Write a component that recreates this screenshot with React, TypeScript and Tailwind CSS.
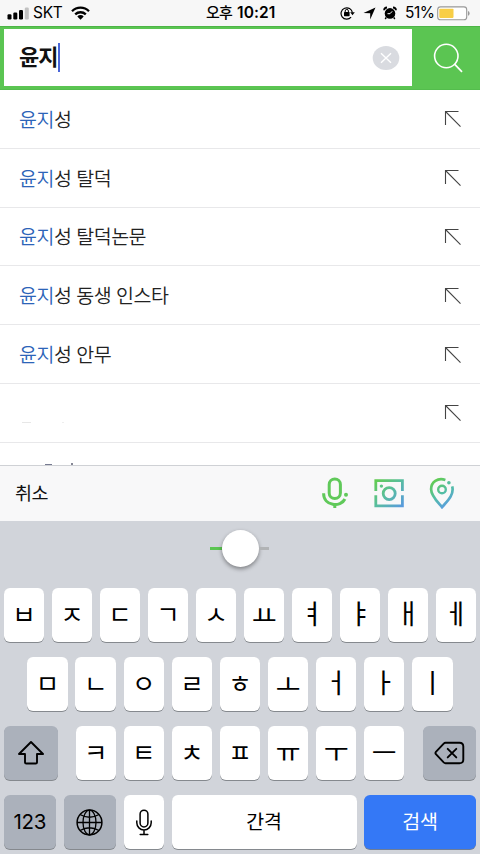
import React from 'react';

const suggestions = ['성', '성 탈덕', '성 탈덕논문', '성 동생 인스타', '성 안무'];
const row1 = ['ㅂ', 'ㅈ', 'ㄷ', 'ㄱ', 'ㅅ', 'ㅛ', 'ㅕ', 'ㅑ', 'ㅐ', 'ㅔ'];
const row2 = ['ㅁ', 'ㄴ', 'ㅇ', 'ㄹ', 'ㅎ', 'ㅗ', 'ㅓ', 'ㅏ', 'ㅣ'];
const row3 = ['ㅋ', 'ㅌ', 'ㅊ', 'ㅍ', 'ㅠ', 'ㅜ', 'ㅡ'];

function StatusBar() {
  return (
    <div className="flex h-[26px] shrink-0 items-center bg-[#f7f7f7] pl-[7px] text-black">
      <svg width="22" height="13" viewBox="0 0 22 13" className="shrink-0">
        <rect x="0.5" y="7.3" width="4" height="5.2" rx="1.2" />
        <rect x="6.3" y="5.6" width="4" height="6.9" rx="1.2" />
        <rect x="12" y="3" width="4" height="9.5" rx="1.2" />
        <rect x="17.8" y="0.5" width="4" height="12" rx="1.2" fill="#c2c2c2" />
      </svg>
      <span className="ml-[4px] w-[33px] font-['Inter'] text-[15.5px] leading-[26px] tracking-[-0.3px]">SKT</span>
      <svg width="19" height="14" viewBox="0 0 19 14" className="ml-[5px] shrink-0">
        <g fill="none" stroke="#000" strokeWidth="2.3">
          <path d="M1 5.2A12.1 12.1 0 0 1 18 5.2" />
          <path d="M4.2 8.4A7.6 7.6 0 0 1 14.8 8.4" />
        </g>
        <path d="M6.3 10.4A4.5 4.5 0 0 1 12.7 10.4L9.5 13.7Z" />
      </svg>
      <div className="ml-[116px] w-[72px] whitespace-nowrap text-[15px] font-medium leading-[26px]">
        <span className="tracking-[-0.8px]">오후</span>
        <span className="ml-[5px] font-['Inter'] text-[15.5px] font-semibold tracking-[0.1px]">10:21</span>
      </div>
      <svg width="15" height="14" viewBox="0 0 15 14" className="ml-[62px] shrink-0">
        <path d="M11.1 11.2A5.7 5.7 0 1 1 12.4 6.7" fill="none" stroke="#000" strokeWidth="1.2" />
        <path d="M10.2 6.3h4.6l-2.3 3z" />
        <rect x="4" y="6" width="5.6" height="4.2" rx="0.6" />
        <path d="M5.2 6V5a1.6 1.6 0 0 1 3.2 0v1" fill="none" stroke="#000" strokeWidth="1" />
      </svg>
      <svg width="13" height="13" viewBox="0 0 13 13" className="ml-[8px] shrink-0">
        <path d="M12.5 0.5L7.2 12.5V6.2L0.5 6.1Z" />
      </svg>
      <svg width="14" height="14" viewBox="0 0 14 14" className="ml-[7px] shrink-0">
        <circle cx="7" cy="7.4" r="5.3" />
        <path d="M1.1 4.3A3 3 0 0 1 4 1.5M13 4.3A3 3 0 0 0 10 1.5" fill="none" stroke="#000" strokeWidth="1.8" />
        <path d="M3.2 11.5L2.2 13M10.8 11.5L11.8 13" stroke="#000" strokeWidth="1.4" />
        <path d="M7 7.7L9.2 5.3M7 7.7H4.5" stroke="#fff" strokeWidth="1" />
      </svg>
      <span className="ml-[8px] w-[29px] font-['Inter'] text-[15.5px] leading-[26px] tracking-[-0.5px]">51%</span>
      <svg width="34" height="15" viewBox="0 0 34 15" className="ml-[3px] shrink-0">
        <rect x="0.7" y="0.9" width="29" height="12.8" rx="2.8" fill="#fff" stroke="#999" strokeWidth="1.1" />
        <rect x="2.3" y="2.7" width="14.2" height="9.2" rx="0.8" fill="#f8ce46" />
        <path d="M31 5v4.8q1.6-.5 1.6-2.4T31 5" fill="#999" />
      </svg>
    </div>
  );
}

function SearchBar() {
  return (
    <div className="flex h-[64px] shrink-0 border-t border-b border-t-[#4db546] border-b-[#54bd4d] bg-[#5bc552] pt-[2px] pb-[3px] pl-[4px]">
      <div className="flex w-[408px] items-center bg-white pr-[12px] pl-[15px]">
        <span className="h-[30px] w-[39px] whitespace-nowrap text-[22px] font-bold leading-[30px] tracking-[-0.9px] text-[#111]">
          윤지
        </span>
        <span className="h-[29px] w-[2px] bg-[#4a66d9]" />
        <svg width="28" height="26" viewBox="0 0 28 26" className="ml-auto">
          <ellipse cx="14" cy="13" rx="13.3" ry="12" fill="#d9dbe0" />
          <path d="M9 8.2L19 17.8M19 8.2L9 17.8" stroke="#fff" strokeWidth="1.4" />
        </svg>
      </div>
      <div className="flex flex-1 items-center justify-center">
        <svg width="32" height="32" viewBox="0 0 32 32" className="ml-[4px]">
          <circle cx="14.3" cy="14" r="11.7" fill="none" stroke="#fff" strokeWidth="1.6" />
          <path d="M22.8 22.3L30 29.8" stroke="#fff" strokeWidth="1.7" />
        </svg>
      </div>
    </div>
  );
}

function Arrow() {
  return (
    <svg width="18" height="18" viewBox="0 0 18 18" className="ml-auto -mt-px shrink-0" fill="none" stroke="#444" strokeWidth="1.1">
      <path d="M1.5 15V1.5H14.5M1.5 1.5L16.5 16.7" />
    </svg>
  );
}

function Toolbar() {
  return (
    <div className="flex h-[56px] shrink-0 items-center border-t border-[#cfd1d5] bg-[#f8f8f9] pl-[15px] text-[18.5px] tracking-[-0.6px] text-[#111]">
      <span className="leading-[26px]">취소</span>
      <svg width="28" height="32" viewBox="0 0 28 32" className="ml-auto -mt-px" fill="none" stroke="#60c95a" strokeWidth="3">
        <rect x="8.2" y="2" width="11.2" height="19.6" rx="5.6" />
        <path d="M2.6 16.2C2.6 29.7 20 30.4 23.9 22" />
        <path d="M13.8 26v5" />
        <circle cx="25" cy="17.7" r="2" fill="#60c95a" stroke="none" />
      </svg>
      <svg width="30" height="30" viewBox="0 0 30 30" className="-mt-px ml-[25px]" fill="none" stroke="url(#camera)" strokeWidth="2.8">
        <defs>
          <linearGradient id="camera" gradientUnits="userSpaceOnUse" x1="2" y1="2" x2="28" y2="28">
            <stop stopColor="#62cc52" /><stop offset=".5" stopColor="#58bda0" /><stop offset="1" stopColor="#599bdd" />
          </linearGradient>
        </defs>
        <path d="M1.8 13V2.6H28.4V13M1.8 17.2V27.8H28.4V17.2" />
        <circle cx="15.2" cy="15.6" r="6" />
        <circle cx="7.4" cy="8.1" r="1.7" fill="#5bc585" stroke="none" />
      </svg>
      <svg width="26" height="32" viewBox="0 0 26 32" className="-mt-px mr-[25.5px] ml-[25px]" fill="none" stroke="url(#pin)" strokeWidth="2.7">
        <defs>
          <linearGradient id="pin" gradientUnits="userSpaceOnUse" x1="4" y1="4" x2="20" y2="28">
            <stop stopColor="#62cc52" /><stop offset=".55" stopColor="#52bda8" /><stop offset="1" stopColor="#5b9de0" />
          </linearGradient>
        </defs>
        <path d="M16.4 3C8.7 .3 2.1 5.2 2.1 12.2C2.1 18.8 8.5 24.8 13 30.2C18 24.4 25.5 17.9 23.2 9.4" />
        <circle cx="13" cy="12.5" r="3.8" strokeWidth="2.4" />
        <circle cx="19.9" cy="5.7" r="1.8" fill="#55bd9c" stroke="none" />
      </svg>
    </div>
  );
}

function Key({ label }: { label: string }) {
  let glyph = 'text-[25.5px] leading-[40px] -mt-px';
  if (label >= 'ㅏ') glyph = 'text-[27px] leading-[40px]';
  if (label === 'ㅛ' || label === 'ㅗ') glyph = 'text-[27px] leading-[40px] mt-[3px]';
  if (label === 'ㅡ') glyph = 'text-[27px] leading-[40px] mt-[2px]';
  return (
    <div className="flex h-[54px] w-[40.4px] items-center justify-center rounded-[6px] bg-white shadow-[0_1px_0_#85898e]">
      <span className={glyph}>{label}</span>
    </div>
  );
}

function Keyboard() {
  return (
    <div className="flex h-[333px] shrink-0 flex-col bg-[#d1d4da] text-black">
      <div className="flex h-[67px] items-start justify-center pt-[9px] pr-[1px]">
        <div className="flex items-center">
          <span className="h-[3px] w-[12px] bg-[#5bc552]" />
          <span className="h-[37px] w-[37px] rounded-full bg-white shadow-[0_2px_4px_rgba(0,0,0,0.4)]" />
          <span className="h-[3px] w-[10px] bg-[#b1b3b5]" />
        </div>
      </div>
      <div className="flex h-[69px] justify-between pr-[3.6px] pl-[3.8px]">
        {row1.map((k) => <Key key={k} label={k} />)}
      </div>
      <div className="flex h-[69px] justify-between pr-[27.4px] pl-[27.4px]">
        {row2.map((k) => <Key key={k} label={k} />)}
      </div>
      <div className="flex h-[69px] justify-between px-[4px]">
        <div className="flex h-[54px] w-[53.5px] items-center justify-center rounded-[6px] bg-[#abb1bb] shadow-[0_1px_0_#85898e]">
          <svg width="28" height="26" viewBox="0 0 28 26" fill="none" stroke="#000" strokeWidth="1.9" strokeLinejoin="round">
            <path d="M14 2L26 14H20V22.2Q20 23.5 18.7 23.5H9.3Q8 23.5 8 22.2V14H2Z" />
          </svg>
        </div>
        <div className="flex w-[329px] justify-between">
          {row3.map((k) => <Key key={k} label={k} />)}
        </div>
        <div className="flex h-[54px] w-[53.5px] items-center justify-center rounded-[6px] bg-[#abb1bb] shadow-[0_1px_0_#85898e]">
          <svg width="31" height="24" viewBox="0 0 31 24" fill="none" stroke="#000" strokeWidth="1.9" strokeLinejoin="round">
            <path d="M11.5 1.8H25.5Q29.3 1.8 29.3 5.6V18.4Q29.3 22.2 25.5 22.2H11.5Q10.5 22.2 9.7 21.4L1.9 13.2Q1 12 1.9 10.8L9.7 2.6Q10.5 1.8 11.5 1.8Z" />
            <path d="M13.7 7.8L22.3 16.4M22.3 7.8L13.7 16.4" strokeLinecap="round" />
          </svg>
        </div>
      </div>
      <div className="flex h-[54px] px-[4px]">
        <div className="flex w-[51.5px] items-center justify-center rounded-[6px] bg-[#abb1bb] font-['Inter'] text-[20.5px] tracking-[-0.3px] shadow-[0_1px_0_#85898e]">123</div>
        <div className="ml-[8px] flex w-[52px] items-center justify-center rounded-[6px] bg-[#abb1bb] shadow-[0_1px_0_#85898e]">
          <svg width="27" height="27" viewBox="0 0 27 27" fill="none" stroke="#000" strokeWidth="1.3">
            <circle cx="13.5" cy="13.5" r="12.4" strokeWidth="1.5" />
            <ellipse cx="13.5" cy="13.5" rx="6.5" ry="12.4" />
            <path d="M13.5 1V26M1 13.5H26M4 5.5Q13.5 11 23 5.5M4 21.5Q13.5 16 23 21.5" />
          </svg>
        </div>
        <div className="ml-[8px] flex w-[40.5px] items-center justify-center rounded-[6px] bg-white shadow-[0_1px_0_#85898e]">
          <svg width="18" height="27" viewBox="0 0 18 27" fill="none" stroke="#000" strokeWidth="1.5" strokeLinecap="round">
            <rect x="5.1" y="1.2" width="7.8" height="16.7" rx="3.9" />
            <path d="M1.8 12V13.8A7.2 7.2 0 0 0 16.2 13.8V12M9 21V25.4M5.2 25.4H12.8" />
          </svg>
        </div>
        <div className="ml-[7.5px] flex w-[185px] items-center justify-center rounded-[6px] bg-white text-[19.5px] tracking-[-0.3px] shadow-[0_1px_0_#85898e]">
          <span className="leading-[26px]">간격</span>
        </div>
        <div className="ml-[7.5px] flex w-[112px] items-center justify-center rounded-[6px] bg-[#3478f6] text-[19.5px] tracking-[-0.3px] text-white shadow-[0_1px_0_#6e7d97]">
          <span className="leading-[26px]">검색</span>
        </div>
      </div>
    </div>
  );
}

export default function App() {
  return (
    <div className="flex h-[854px] w-[480px] flex-col overflow-hidden bg-white font-['Liberation_Sans','Noto_Sans_CJK_KR',sans-serif]">
      <StatusBar />
      <SearchBar />
      <div className="flex h-[375px] shrink-0 flex-col overflow-hidden bg-white">
        {suggestions.map((s) => (
          <div key={s} className="flex h-[58.8px] shrink-0 items-center border-b border-[#e8e8ea] pt-[2px] pr-[18px] pl-[19px] text-[19.5px] font-[350] tracking-[-0.5px] text-[#222]">
            <span className="leading-[28px]"><span className="text-[#2c64b8]">윤지</span>{s}</span>
            <Arrow />
          </div>
        ))}
        <div className="flex h-[58.8px] shrink-0 items-center border-b border-[#e8e8ea] pt-[2px] pr-[18px] pl-[22px]">
          <span className="mt-[18px] h-px w-[9px] bg-[#e7e7e7]" />
          <span className="mt-[18px] ml-[31px] h-px w-[2px] bg-[#eeeeee]" />
          <Arrow />
        </div>
        <div className="flex flex-1 items-end pl-[45px]">
          <span className="h-px w-[7px] bg-[#777b91]" />
          <span className="ml-[19px] h-[2px] w-[2px] bg-[#858795]" />
        </div>
      </div>
      <Toolbar />
      <Keyboard />
    </div>
  );
}
